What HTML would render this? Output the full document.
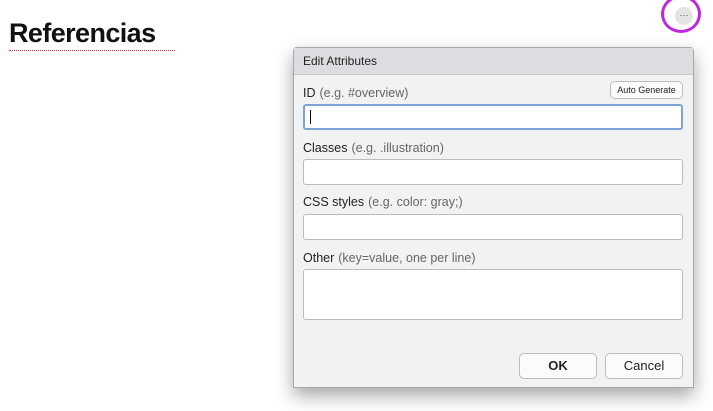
<!DOCTYPE html>
<html><head><style>
body{margin:0;width:713px;height:411px;background:#fff;position:relative;overflow:hidden;font-family:"Liberation Sans",sans-serif;}
.h{position:absolute;left:9px;top:18px;font-size:27px;font-weight:bold;color:#111;letter-spacing:-0.6px;}
.ul{position:absolute;left:9px;top:50px;width:166px;border-top:1px dotted #c33;}
.ring{position:absolute;left:661px;top:-5px;width:40px;height:38px;box-sizing:border-box;border:3px solid #c026e0;border-radius:50%;}
.dot{position:absolute;left:675px;top:7px;width:18px;height:18px;border-radius:50%;background:#e4e4e4;font-size:9px;text-align:center;line-height:16px;color:#444;}
.dlg{position:absolute;left:293px;top:47px;width:401px;height:341px;background:#f1f2f2;border:1px solid #a8a8a8;border-radius:4px 4px 0 0;box-shadow:0 8px 18px rgba(0,0,0,.35);box-sizing:border-box;}
.hd{height:26px;background:#dcdde0;border-bottom:1px solid #c8c8c8;font-size:12px;line-height:26px;padding-left:9px;color:#222;}
.lb{position:absolute;left:9px;font-size:12.5px;color:#222;}
.lb span{color:#666;margin-left:4px;}
.in{position:absolute;left:9px;width:380px;height:26px;background:#fff;border:1px solid #bcbcbc;border-radius:3px;box-sizing:border-box;}
.btn{position:absolute;background:#fbfbfb;border:1px solid #bdbdbd;border-radius:5px;box-sizing:border-box;text-align:center;color:#222;}
</style></head><body>
<div class="h">Referencias</div><div class="ul"></div>
<div class="ring"></div><div class="dot">···</div>
<div class="dlg">
<div class="hd">Edit Attributes</div>
<div class="btn" style="left:316px;top:33px;width:73px;height:18px;font-size:9px;line-height:16px;white-space:nowrap;">Auto Generate</div>
<div class="lb" style="top:38px">ID<span>(e.g. #overview)</span></div>
<div class="in" style="top:56px;border:2px solid #7ea2d6;"><div style="position:absolute;left:5px;top:4px;width:1px;height:14px;background:#000"></div></div>
<div class="lb" style="top:93px">Classes<span>(e.g. .illustration)</span></div>
<div class="in" style="top:111px"></div>
<div class="lb" style="top:147px">CSS styles<span>(e.g. color: gray;)</span></div>
<div class="in" style="top:166px"></div>
<div class="lb" style="top:203px">Other<span>(key=value, one per line)</span></div>
<div class="in" style="top:221px;height:51px"></div>
<div class="btn" style="left:225px;top:305px;width:78px;height:26px;font-size:13px;font-weight:bold;line-height:24px;">OK</div>
<div class="btn" style="left:311px;top:305px;width:78px;height:26px;font-size:13px;line-height:24px;">Cancel</div>
</div>
</body></html>
